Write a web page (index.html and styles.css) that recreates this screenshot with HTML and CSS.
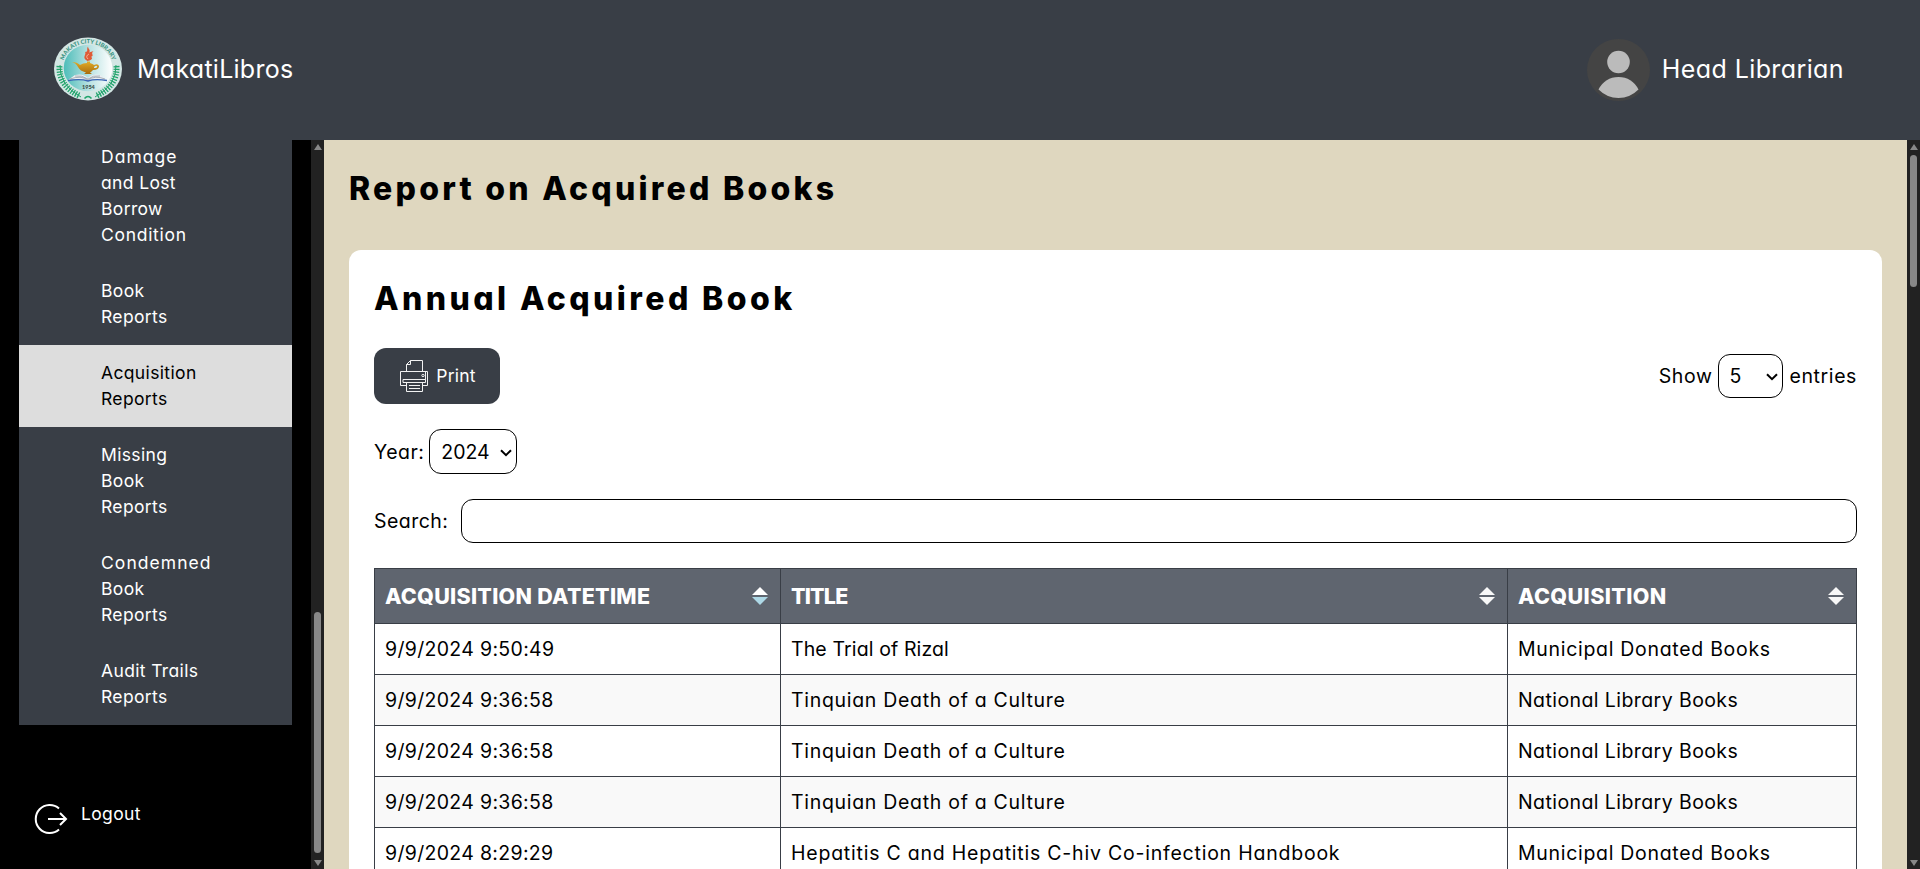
FILE: index.html
```html
<!DOCTYPE html>
<html lang="en">
<head>
<meta charset="utf-8">
<title>MakatiLibros</title>
<link rel="stylesheet" href="styles.css">
</head>
<body>
<header class="topbar">
  <div class="brand">
    <svg class="brand-logo" viewBox="0 0 68 64" preserveAspectRatio="none">
      <defs>
        <linearGradient id="disc" x1="0" y1="0" x2="1" y2="0"><stop offset="0" stop-color="#4dbdb9"/><stop offset=".5" stop-color="#b4e0e0"/><stop offset="1" stop-color="#fff"/></linearGradient>
        <linearGradient id="gold" x1="0" y1="0" x2="0" y2="1"><stop offset="0" stop-color="#e3ac26"/><stop offset="1" stop-color="#a96c0c"/></linearGradient>
        <path id="arc" d="M8.500 31A25.500 24.600 0 0 1 59.500 31"/>
      </defs>
      <ellipse cx="34" cy="32" rx="34" ry="31.500" fill="#d3e6e4"/>
      <ellipse cx="34" cy="31" rx="24.300" ry="23.300" fill="url(#disc)"/>
      <text class="seal-arc"><textPath href="#arc" startOffset="50%" text-anchor="middle">MAKATI CITY LIBRARY</textPath></text>
      <g fill="none" stroke="#22a46c">
        <path d="M6 28Q5 48 27 60M62 28Q63 48 41 60" stroke-width="1"/>
        <path d="M5.500 29Q4.500 49 26 59M62.500 29Q63.500 49 42 59" stroke-width="6" stroke-dasharray="1.300 1.300"/>
        <path d="M30.500 61.500Q34 57.500 37.500 61.500" stroke-width="1.600"/>
      </g>
      <path d="M33.500 24C27 21 33 17 31 15C35 15 32 12 34 9.500C34 12 37 13 35 15.500L39.500 14C36 17 41 18 37 20C40 21 36 24 33.500 24Z" fill="#df5a36"/>
      <path d="M34 22Q31 19 35 17" stroke="#f4c4a8" fill="none" stroke-width=".8"/>
      <path d="M18 25Q23 25 26 28Q29 26 33 26V24.500H36V26Q39 27 40 28Q44 26 45 29Q45 33 39 33Q37 35 36 35.500L38 37H30L32 35.500Q26 34 24 30Q22 26 18 25ZM40 31Q44 31 43 29Q42 28 40 30Z" fill="url(#gold)" fill-rule="evenodd"/>
      <path d="M14 43L21 38Q29 36 34 41Q39 36 46 38L53 43Q40 41 34 44Q28 41 14 43Z" fill="#eceef2"/>
      <path d="M16 42Q27 38 34 43Q41 38 51 42M21 39Q28 38 34 42Q39 38 46 39" fill="none" stroke="#8b969f" stroke-width=".7"/>
      <path d="M14 43.500Q27 41.500 34 44Q41 41.500 53 43.500" fill="none" stroke="#3a65b4" stroke-width="1.400"/>
      <text class="seal-year" x="28" y="51.500">1954</text>
    </svg>
    <span class="brand-name">MakatiLibros</span>
  </div>
  <div class="user">
    <svg class="avatar" viewBox="0 0 63 62"><ellipse cx="31.500" cy="31" rx="31.500" ry="31" fill="#444"/><circle cx="31.500" cy="23" r="11.300" fill="#bbb"/><path d="M11.500 50.500Q18 38 31.500 38T51.500 50.500Q43 59 31.500 59T11.500 50.500Z" fill="#bbb"/></svg>
    <span class="user-name">Head Librarian</span>
  </div>
</header>
<div class="body">
  <aside class="sidebar">
    <nav class="menu">
      <a class="item item-first"><span class="wide">Damage</span><br>and Lost<br>Borrow<br><span class="mid">Condition</span></a>
      <a class="item">Book<br>Reports</a>
      <a class="item active">Acquisition<br>Reports</a>
      <a class="item">Missing<br>Book<br>Reports</a>
      <a class="item"><span class="wide">Condemned</span><br>Book<br>Reports</a>
      <a class="item">Audit Trails<br>Reports</a>
    </nav>
    <a class="logout">
      <svg class="logout-icon" viewBox="0 0 34 32" fill="none" stroke="#fff" stroke-width="2"><path d="M25 5.500A14 14 0 1 0 25 26.500"/><path d="M14 16H32M26 10L32 16L26 22"/></svg>
      <span>Logout</span>
    </a>
  </aside>
  <div class="scroll">
    <i class="arrow up"></i><i class="thumb thumb-side"></i><i class="arrow down"></i>
  </div>
  <main class="main">
    <h1 class="title title-page">Report on Acquired Books</h1>
    <section class="card">
      <h2 class="title title-card">Annual Acquired Book</h2>
      <div class="toolbar">
        <button class="print">
          <svg class="print-icon" viewBox="0 0 28 32" fill="none" stroke="#f2f2f2" stroke-width="1"><path d="M6.500 11V4.500L10.500.500H22.500V11M10.500.500V4.500H6.500M22.500 19.500H25.500V11.500H.500V25.500H6M23 25.500H27.500V11.500H25M3 19.500H25.500V22.500H3ZM6.500 22.500V31.500H22.500V22.500M9 25.500H20M9 28.500H20"/><circle cx="23" cy="15.500" r="1.200"/></svg>
          <span>Print</span>
        </button>
        <div class="entries">
          <span>Show</span>
          <span class="picker"><select class="select select-count"><option>5</option></select><svg class="chevron" viewBox="0 0 12 8"><path d="M1 1.200L6 6.200L11 1.200"/></svg></span>
          <span>entries</span>
        </div>
      </div>
      <div class="year">
        <span>Year:</span>
        <span class="picker"><select class="select select-year"><option>2024</option></select><svg class="chevron" viewBox="0 0 12 8"><path d="M1 1.200L6 6.200L11 1.200"/></svg></span>
      </div>
      <div class="search"><label>Search:</label><input class="search-input" type="text"></div>
      <table class="table">
        <colgroup><col class="c1"><col class="c2"><col class="c3"></colgroup>
        <thead><tr>
          <th><div class="th"><span class="th-date">ACQUISITION DATETIME</span><svg class="sort" viewBox="0 0 16 18"><path d="M0 8L8 0L16 8Z" fill="#fff"/><path d="M0 10H16L8 18Z" fill="#add8e6"/></svg></div></th>
          <th><div class="th"><span class="th-title">TITLE</span><svg class="sort" viewBox="0 0 16 18"><path d="M0 8L8 0L16 8ZM0 10H16L8 18Z" fill="#f8f8f8"/></svg></div></th>
          <th><div class="th"><span class="th-acq">ACQUISITION</span><svg class="sort" viewBox="0 0 16 18"><path d="M0 8L8 0L16 8ZM0 10H16L8 18Z" fill="#f8f8f8"/></svg></div></th>
        </tr></thead>
        <tbody>
          <tr><td class="date">9/9/2024 9:50:49</td><td class="tight">The Trial of Rizal</td><td class="loose">Municipal Donated Books</td></tr>
          <tr><td class="date">9/9/2024 9:36:58</td><td class="loose">Tinquian Death of a Culture</td><td>National Library Books</td></tr>
          <tr><td class="date">9/9/2024 9:36:58</td><td class="loose">Tinquian Death of a Culture</td><td>National Library Books</td></tr>
          <tr><td class="date">9/9/2024 9:36:58</td><td class="loose">Tinquian Death of a Culture</td><td>National Library Books</td></tr>
          <tr><td class="date">9/9/2024 8:29:29</td><td class="looser">Hepatitis C and Hepatitis C-hiv Co-infection Handbook</td><td class="loose">Municipal Donated Books</td></tr>
        </tbody>
      </table>
    </section>
  </main>
  <div class="scroll">
    <i class="arrow up"></i><i class="thumb thumb-main"></i><i class="arrow down"></i>
  </div>
</div>
</body>
</html>
```
FILE: styles.css
```css
* { box-sizing: border-box; }
body {
  margin: 0;
  height: 869px;
  overflow: hidden;
  display: flex;
  flex-direction: column;
  font-family: Inter, "Open Sans", sans-serif;
  font-feature-settings: "cv11", "ss03";
  font-size: 19.5px;
  line-height: 30px;
  color: #000;
}
.topbar {
  height: 140px;
  flex: none;
  display: flex;
  align-items: center;
  justify-content: space-between;
  padding: 0 76px 0 54px;
  background: #393e46;
  color: #fff;
  font-size: 25px;
}
.brand { display: flex; align-items: center; gap: 15px; }
.brand-logo { width: 68px; height: 64px; margin-bottom: 3px; }
.brand-name, .user-name { margin-top: -2px; }
.brand-name { letter-spacing: .26px; }
.user-name { letter-spacing: .4px; }
.seal-arc { font: 900 5.9px Lato, sans-serif; fill: #3a9483; }
.seal-year { font: 900 5.5px Lato, sans-serif; fill: #354b45; }
.user { display: flex; align-items: center; gap: 12px; }
.avatar { width: 63px; height: 62px; }
.body { flex: 1; min-height: 0; display: flex; }
.sidebar { width: 311px; flex: none; background: #000; color: #fff; padding: 0 19px; font-size: 17.5px; line-height: 26px; letter-spacing: .36px; }
.menu { background: #393e46; display: flex; flex-direction: column; }
.item { padding: 15px 20px 15px 82px; }
.item-first { padding-top: 4px; }
.active { background: #ddd; color: #000; }
.wide { letter-spacing: 1.05px; }
.mid { letter-spacing: .7px; }
.logout { display: flex; align-items: flex-start; gap: 13px; padding: 76px 0 0 15px; }
.logout-icon { width: 34px; height: 32px; margin-top: 2px; }
.scroll { width: 13px; flex: none; background: #222; display: flex; flex-direction: column; align-items: center; padding: 4px 0 3px; }
.arrow { border: 4.5px solid transparent; border-top: 0; border-bottom: 6px solid #888; }
.down { border-top: 6px solid #888; border-bottom: 0; margin-top: auto; }
.thumb { width: 7px; border-radius: 4px; background: #888; }
.thumb-side { height: 241px; margin-top: 462px; }
.thumb-main { height: 132px; margin-top: 5px; }
.main { flex: 1; min-width: 0; background: #dfd7bf; padding: 25px 25px 0; overflow: hidden; display: flex; flex-direction: column; }
.title { margin: 0; font-size: 32px; line-height: 48px; font-weight: 800; letter-spacing: 3.24px; }
.title-card { letter-spacing: 3.4px; }
.card { flex: 1; min-height: 0; overflow: hidden; margin-top: 37px; background: #fff; border-radius: 12px 12px 0 0; padding: 25px 25px 0; }
.toolbar { display: flex; justify-content: space-between; align-items: center; margin-top: 25px; }
.print {
  display: flex; align-items: center; justify-content: center; gap: 8px;
  width: 126px; height: 56px; padding: 0 0 1px 2px; border: 0; border-radius: 12px;
  background: #393e46; color: #fff;
  font: 17.5px Inter, sans-serif;
  letter-spacing: .25px;
}
.print-icon { width: 28px; height: 32px; }
.entries, .year { display: flex; align-items: center; gap: 6px; }
.entries { letter-spacing: .6px; }
.entries .picker { margin: 0 1px 0 -1px; }
.year { gap: 5px; }
.year, .search { letter-spacing: .45px; }
.picker { position: relative; display: flex; }
.chevron { position: absolute; right: 5px; top: 50%; margin-top: -3px; width: 12px; height: 8px; fill: none; stroke: #000; stroke-width: 2; pointer-events: none; }
.select { appearance: none; border: 1px solid #000; border-radius: 12px; background: #fff; color: #000; font: 19.5px Inter, sans-serif; padding: 0 0 0 11px; }
.select-count { width: 65px; height: 44px; }
.select-year { width: 88px; height: 45px; }
.year { margin-top: 25px; }
.search { display: flex; align-items: center; justify-content: space-between; margin-top: 25px; }
.search-input { width: 1396px; height: 44px; border: 1px solid #000; border-radius: 12px; background: #fff; }
.table { width: 1483px; margin-top: 25px; table-layout: fixed; border-collapse: collapse; }
.c1 { width: 406px; }
.c2 { width: 727px; }
.c3 { width: 349px; }
.table th, .table td { border: 1px solid #393e46; padding: 10px 12px 10px 10px; text-align: left; white-space: nowrap; }
.table td { height: 51px; letter-spacing: .42px; }
.table td.date { letter-spacing: .32px; }
.table td.tight { letter-spacing: .12px; }
.table td.loose { letter-spacing: .7px; }
.table td.looser { letter-spacing: .78px; }
.table th { height: 55px; background: #5f656f; color: #fff; font-size: 21.5px; font-weight: 800; }
.table tbody tr:nth-child(even) { background: #f9f9f9; }
.th { display: flex; align-items: center; justify-content: space-between; }
.th-date { letter-spacing: .27px; }
.th-title { letter-spacing: -.8px; }
.th-acq { letter-spacing: .4px; }
.sort { width: 16px; height: 18px; }
```
